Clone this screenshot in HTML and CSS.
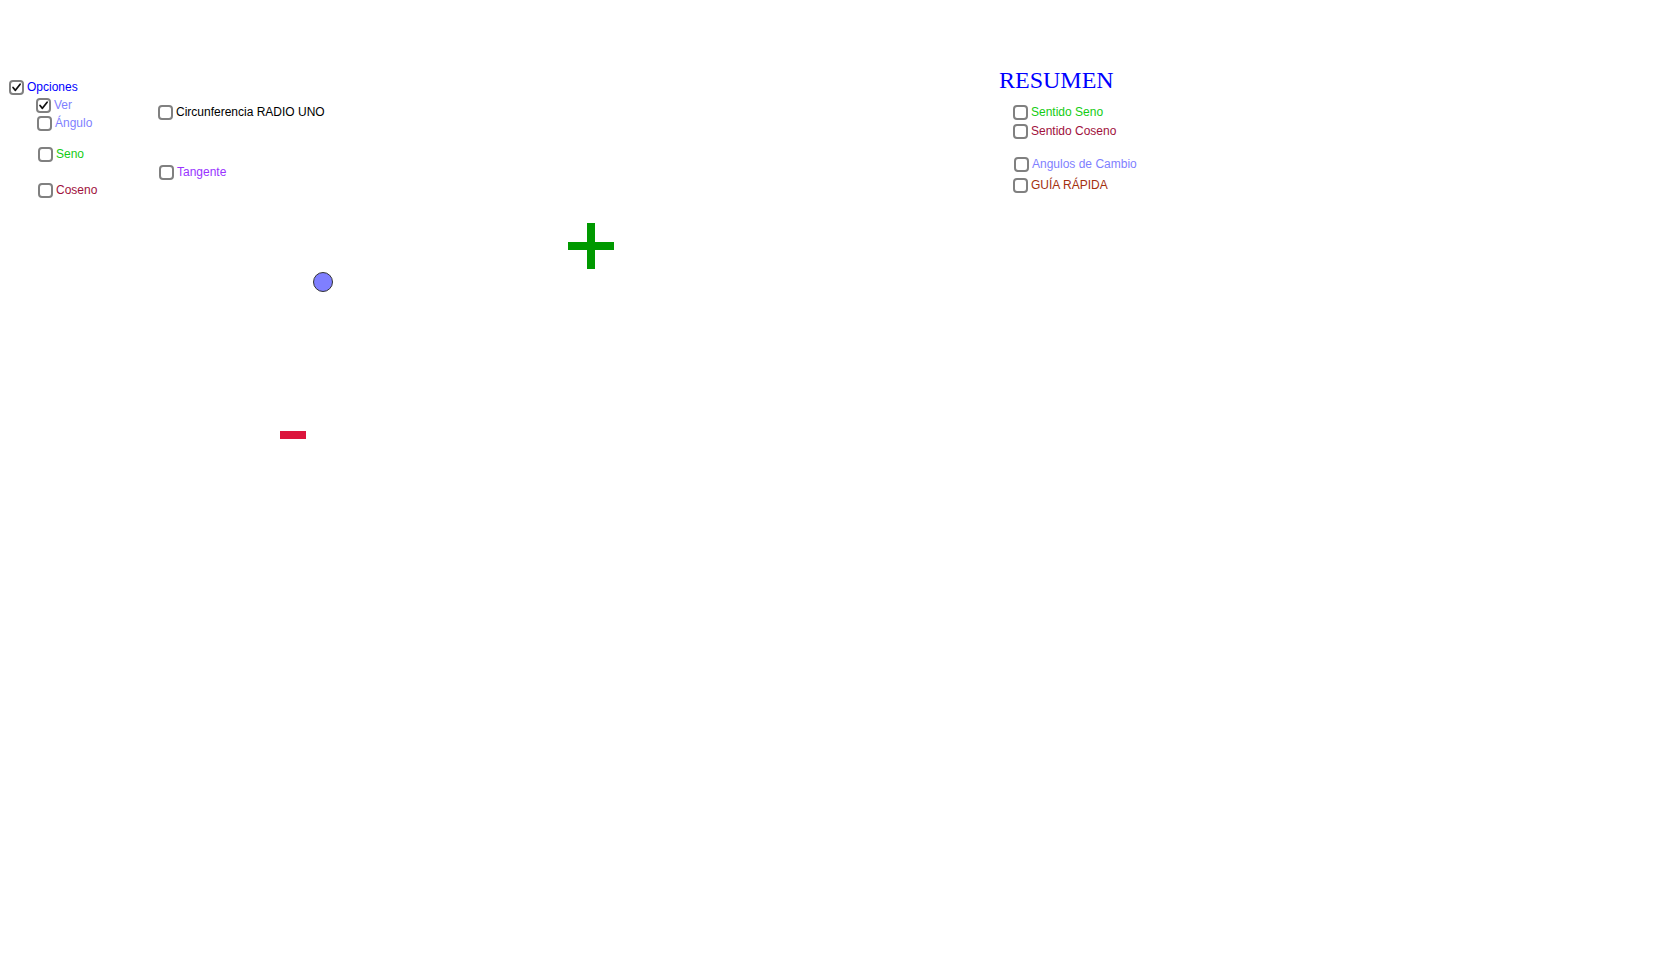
FILE: index.html
```html
<!DOCTYPE html>
<html lang="es">
<head>
<meta charset="utf-8">
<title>Circunferencia goniométrica</title>
<link rel="stylesheet" href="styles.css">
</head>
<body>
<div class="canvas">
  <div class="item i-opciones"><span class="box checked"><svg viewBox="0 0 14 14"><path d="M2.6 7 L5.6 10.6 L11.6 2.8" /></svg></span><span class="label c-blue">Opciones</span></div>
  <div class="item i-ver"><span class="box checked"><svg viewBox="0 0 14 14"><path d="M2.6 7 L5.6 10.6 L11.6 2.8" /></svg></span><span class="label c-light">Ver</span></div>
  <div class="item i-angulo"><span class="box"></span><span class="label c-light">Ángulo</span></div>
  <div class="item i-seno"><span class="box"></span><span class="label c-green">Seno</span></div>
  <div class="item i-coseno"><span class="box"></span><span class="label c-crimson">Coseno</span></div>
  <div class="item i-circ"><span class="box"></span><span class="label c-black">Circunferencia RADIO UNO</span></div>
  <div class="item i-tang"><span class="box"></span><span class="label c-purple">Tangente</span></div>

  <div class="title">RESUMEN</div>
  <div class="item i-sseno"><span class="box"></span><span class="label c-green">Sentido Seno</span></div>
  <div class="item i-scoseno"><span class="box"></span><span class="label c-crimson">Sentido Coseno</span></div>
  <div class="item i-angulos"><span class="box"></span><span class="label c-light">Angulos de Cambio</span></div>
  <div class="item i-guia"><span class="box"></span><span class="label c-brown">GUÍA RÁPIDA</span></div>

  <div class="plus"><span class="plus-h"></span><span class="plus-v"></span></div>
  <div class="point"></div>
  <div class="minus"></div>
</div>
</body>
</html>
```
FILE: styles.css
```css
html, body {
  margin: 0;
  padding: 0;
  background: #ffffff;
}
body {
  font-family: "Liberation Sans", Arial, sans-serif;
  font-size: 12px;
}
.canvas {
  position: relative;
  width: 1680px;
  height: 957px;
  overflow: hidden;
}
.item {
  position: absolute;
  display: flex;
  align-items: center;
  gap: 3px;
  height: 15px;
  white-space: nowrap;
}
.box {
  box-sizing: border-box;
  width: 15px;
  height: 15px;
  border: 2px solid #808080;
  border-radius: 4px;
  background: #ffffff;
  display: flex;
  align-items: center;
  justify-content: center;
  flex: none;
}
.box svg {
  width: 13px;
  height: 13px;
  display: block;
}
.box svg path {
  fill: none;
  stroke: #111111;
  stroke-width: 2.2;
  stroke-linecap: round;
  stroke-linejoin: round;
}
.label {
  line-height: 15px;
}
.c-blue { color: #0000ff; }
.c-light { color: #7f7fff; }
.c-green { color: #14cc14; }
.c-crimson { color: #a0103c; }
.c-black { color: #000000; }
.c-purple { color: #9933ff; }
.c-brown { color: #a3300f; }

.i-opciones { left: 9px; top: 80px; }
.i-ver { left: 36px; top: 98px; }
.i-angulo { left: 37px; top: 116px; }
.i-seno { left: 38px; top: 147px; }
.i-coseno { left: 38px; top: 183px; }
.i-circ { left: 158px; top: 105px; }
.i-tang { left: 159px; top: 165px; }
.i-sseno { left: 1013px; top: 105px; }
.i-scoseno { left: 1013px; top: 124px; }
.i-angulos { left: 1014px; top: 157px; }
.i-guia { left: 1013px; top: 178px; }

.title {
  position: absolute;
  left: 999px;
  top: 68px;
  font-family: "Liberation Serif", "Times New Roman", serif;
  font-size: 24px;
  line-height: 24px;
  color: #0000ff;
}

.plus {
  position: absolute;
  left: 568px;
  top: 223px;
  width: 46px;
  height: 46px;
}
.plus-h {
  position: absolute;
  left: 0;
  top: 19px;
  width: 46px;
  height: 8px;
  background: #009900;
}
.plus-v {
  position: absolute;
  left: 19px;
  top: 0;
  width: 8px;
  height: 46px;
  background: #009900;
}
.point {
  position: absolute;
  left: 313px;
  top: 272px;
  width: 20px;
  height: 20px;
  box-sizing: border-box;
  border-radius: 50%;
  background: #7f7fff;
  border: 1px solid #333333;
}
.minus {
  position: absolute;
  left: 280px;
  top: 431px;
  width: 26px;
  height: 8px;
  background: #dc143c;
}
```
